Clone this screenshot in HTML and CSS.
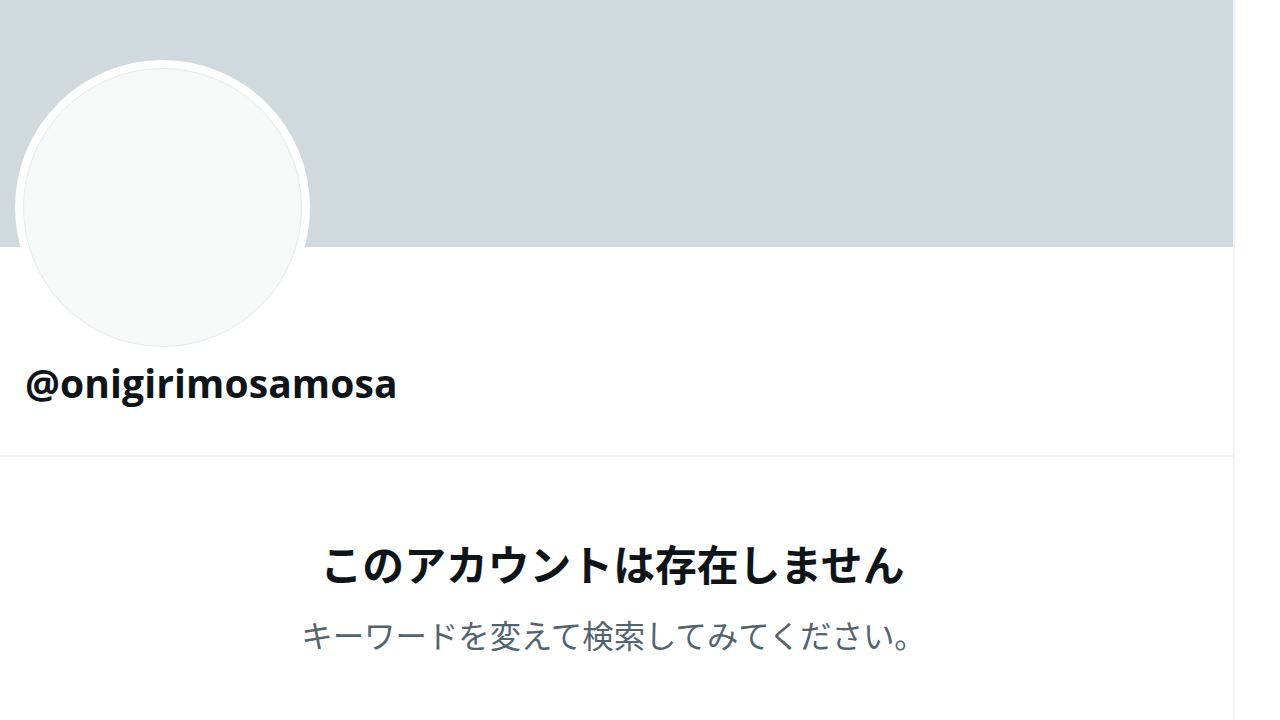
FILE: index.html
```html
<!DOCTYPE html>
<html lang="ja">
<head>
<meta charset="utf-8">
<link rel="stylesheet" href="styles.css">
</head>
<body>
<div class="page">
  <main class="column">
    <div class="banner"></div>
    <section class="profile">
      <div class="avatar"><div class="avatar-inner"></div></div>
      <div class="handle">@onigirimosamosa</div>
    </section>
    <section class="empty">
      <h1 class="empty-title">このアカウントは存在しません</h1>
      <p class="empty-sub">キーワードを変えて検索してみてください。</p>
    </section>
  </main>
  <aside class="side"></aside>
</div>
</body>
</html>
```
FILE: styles.css
```css
html, body {
  margin: 0;
  padding: 0;
  background: #ffffff;
  height: 100%;
  overflow: hidden;
}
.page {
  display: flex;
  height: 720px;
  font-family: "Open Sans", "Noto Sans CJK JP", sans-serif;
}
.column {
  width: 1233px;
  border-right: 2px solid #eff3f4;
  display: flex;
  flex-direction: column;
}
.side {
  flex: 1;
}
.banner {
  height: 247px;
  background: #cfd9de;
}
.profile {
  position: relative;
  height: 208px;
  border-bottom: 2px solid #eff3f4;
  padding: 0 25px;
  display: flex;
  flex-direction: column;
}
.avatar {
  position: absolute;
  left: 15px;
  top: -187px;
  width: 295px;
  height: 295px;
  border-radius: 50%;
  background: #ffffff;
  display: flex;
  align-items: center;
  justify-content: center;
}
.avatar-inner {
  width: 277px;
  height: 277px;
  border-radius: 50%;
  background: #f7f9f9;
  border: 1px solid #e6eaeb;
}
.handle {
  margin-top: 112px;
  font-family: "Open Sans", sans-serif;
  font-weight: 700;
  font-size: 39px;
  line-height: 48px;
  color: #0f1419;
  letter-spacing: 0.1px;
}
.empty {
  display: flex;
  flex-direction: column;
  align-items: center;
  padding-right: 8px;
}
.empty-title {
  margin: 80px 0 0;
  font-family: "Noto Sans CJK JP", sans-serif;
  font-weight: 700;
  font-size: 41.8px;
  line-height: 52px;
  color: #0f1419;
}
.empty-sub {
  margin: 26px 0 0;
  font-family: "Noto Sans CJK JP", sans-serif;
  font-weight: 400;
  font-size: 31.4px;
  line-height: 40px;
  color: #536471;
  padding-left: 2px;
}
```
